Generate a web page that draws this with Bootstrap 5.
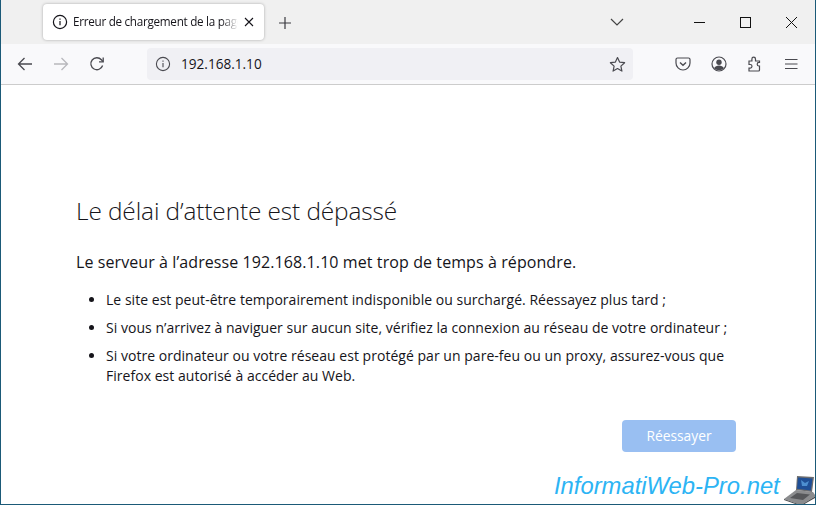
<!DOCTYPE html>
<html lang="fr">
<head>
  <meta charset="UTF-8" />
  <meta name="viewport" content="width=device-width, initial-scale=1" />
  <title>Erreur de chargement de la page</title>
  <link href="https://cdn.jsdelivr.net/npm/bootstrap@5.3.0/dist/css/bootstrap.min.css" rel="stylesheet" />
  <style>
    html, body { height: 100%; }
    body {
      background: #fff;
      font-family: "Open Sans", "Noto Sans", sans-serif;
      color: #15141a;
      overflow: hidden;
    }
    .fenetre {
      height: 505px;
      border-left: 1px solid #1b5a78;
      border-right: 1px solid #1b5a78;
      border-bottom: 1px solid #1b5a78;
      position: relative;
      overflow: hidden;
    }
    .barre-onglets { height: 44px; background: #f0f0f0; padding-left: 42px; }
    .onglet {
      width: 221px; height: 36px; margin-top: 4px;
      background: #fff; border-radius: 4px;
      box-shadow: 0 0 3px rgba(0,0,0,.3);
      padding: 0 9px;
      font-size: 11.7px;
      letter-spacing: -.28px;
    }
    .onglet-titre {
      width: 165px; margin-left: 5px; white-space: nowrap; overflow: hidden;
      -webkit-mask-image: linear-gradient(to right, #000 90%, transparent);
      mask-image: linear-gradient(to right, #000 90%, transparent);
    }
    .ico-plus { margin-left: 14px; }
    .fenetre-btns { margin-left: auto; margin-right: 1px; }
    .chevron { margin-right: 52px; }
    .btn-win { width: 46px; display: flex; justify-content: center; }
    .barre-outils {
      height: 41px; background: #f9f9fb;
      border-bottom: 1px solid #ccc;
      padding-left: 16px;
    }
    .nav-gauche { gap: 20px; width: 130px; }
    .url {
      width: 486px; height: 32px; background: #f0f0f4; border-radius: 4px;
      padding: 0 7px 0 8px; font-size: 13.6px; color: #15141a;
    }
    .url-texte { margin-left: 10px; padding-top: 1px; }
    .nav-droite { gap: 20px; margin-left: 42px; }
    .contenu { padding: 110px 0 0 75px; width: 735px; }
    .titre-erreur { font-size: 24.4px; font-weight: 300; line-height: 32px; margin: 0 0 24px; letter-spacing: -.1px; color: #15141a; }
    .sous-titre { font-size: 16px; line-height: 22px; margin: 0 0 17px; letter-spacing: .09px; }
    .liste-erreur { font-size: 14px; line-height: 20px; padding-left: 30px; margin: 0; letter-spacing: .03px; }
    .liste-erreur li { margin-bottom: 8px; }
    .btn-reessayer {
      background: #99bff2; color: #fff; border: 0; border-radius: 4px;
      width: 114px; height: 32px; font-size: 13.8px; padding: 0;
    }
    .zone-bouton { margin-top: 34px; }
    .filigrane {
      position: absolute; left: 553px; top: 473px;
      font-family: "Liberation Sans", sans-serif; font-style: italic;
      font-size: 23.8px; line-height: 26px; color: #2cb4f4; white-space: nowrap;
    }
    .portable { position: absolute; left: 782px; top: 474px; }
  </style>
</head>
<body>
  <div class="fenetre">
    <!-- Onglets -->
    <div class="barre-onglets d-flex align-items-start">
      <div class="onglet d-flex align-items-center">
        <svg width="16" height="16" viewBox="0 0 16 16" fill="none" stroke="#15141a" stroke-width="1.2"><circle cx="8" cy="8" r="6.6"/><path d="M8 7v4.2M8 4.4v1.4"/></svg>
        <span class="onglet-titre">Erreur de chargement de la page</span>
        <svg class="ms-auto" width="12" height="12" viewBox="0 0 12 12" stroke="#15141a" stroke-width="1.1"><path d="M2 2l8 8M10 2l-8 8"/></svg>
      </div>
      <svg class="ico-plus mt-3" width="14" height="14" viewBox="0 0 14 14" stroke="#3a3a40" stroke-width="1.2"><path d="M7 1v12M1 7h12"/></svg>
      <div class="fenetre-btns d-flex align-items-center h-100">
        <svg class="chevron" width="14" height="8" viewBox="0 0 14 8" fill="none" stroke="#444" stroke-width="1.2"><path d="M1 1l6 6 6-6"/></svg>
        <div class="btn-win"><svg width="11" height="11" viewBox="0 0 11 11" stroke="#111" stroke-width="1"><path d="M0 5.5h11"/></svg></div>
        <div class="btn-win"><svg width="11" height="11" viewBox="0 0 11 11" fill="none" stroke="#111" stroke-width="1"><rect x=".5" y=".5" width="10" height="10"/></svg></div>
        <div class="btn-win"><svg width="11" height="11" viewBox="0 0 11 11" stroke="#111" stroke-width="1"><path d="M0 0l11 11M11 0L0 11"/></svg></div>
      </div>
    </div>

    <!-- Barre d'outils -->
    <div class="barre-outils d-flex align-items-center">
      <div class="nav-gauche d-flex align-items-center">
        <svg width="16" height="16" viewBox="0 0 16 16" fill="none" stroke="#4a4a50" stroke-width="1.3"><path d="M15 8H1.5M7.5 2l-6 6 6 6"/></svg>
        <svg width="16" height="16" viewBox="0 0 16 16" fill="none" stroke="#b8b8bc" stroke-width="1.3"><path d="M1 8h13.5M8.5 2l6 6-6 6"/></svg>
        <svg width="16" height="16" viewBox="0 0 16 16" fill="none" stroke="#4a4a50" stroke-width="1.3"><path d="M13.6 9.5A6 6 0 1 1 12.4 3.8L14 5.6"/><path d="M14.2 1.6v4.2H10" /></svg>
      </div>
      <div class="url d-flex align-items-center">
        <svg width="16" height="16" viewBox="0 0 16 16" fill="none" stroke="#4a4a50" stroke-width="1.1"><circle cx="8" cy="8" r="6.6"/><path d="M8 7v4.2M8 4.4v1.4"/></svg>
        <span class="url-texte">192.168.1.10</span>
        <svg class="ms-auto" width="17" height="17" viewBox="0 0 17 17" fill="none" stroke="#4a4a50" stroke-width="1.2"><path d="M8.5 1.5l2.1 4.6 5 .6-3.7 3.4 1 5-4.4-2.5-4.4 2.5 1-5L1.4 6.700l5-.6z" stroke-linejoin="round"/></svg>
      </div>
      <div class="nav-droite d-flex align-items-center">
        <svg width="16" height="16" viewBox="0 0 16 16" fill="none" stroke="#4a4a50" stroke-width="1.2"><path d="M2.500 2h11A1.500 1.500 0 0 1 15 3.500V7a7 7 0 0 1-14 0V3.500A1.500 1.500 0 0 1 2.500 2z"/><path d="M5 6.500l3 2.800 3-2.800" stroke-width="1.4"/></svg>
        <svg width="16" height="16" viewBox="0 0 16 16" fill="none" stroke="#4a4a50" stroke-width="1.2"><circle cx="8" cy="8" r="7"/><circle cx="8" cy="6.200" r="2.700" fill="#4a4a50" stroke="none"/><path d="M3 12.300c1-2 3-2.800 5-2.800s4 .8 5 2.800c-1.300 1.300-3 2-5 2s-3.700-.7-5-2z" fill="#4a4a50" stroke="none"/></svg>
        <svg width="16" height="16" viewBox="0 0 16 16" fill="none" stroke="#4a4a50" stroke-width="1.2"><path d="M2 15h9.500a1 1 0 0 0 1-1V10h-.5a1.800 1.800 0 0 1 0-3.600h.5V5h-4V3a1.800 1.800 0 0 0-3.600 0v2H2v3.500h1.200a1.800 1.800 0 0 1 0 3.600H2z"/></svg>
        <svg width="16" height="16" viewBox="0 0 16 16" stroke="#4a4a50" stroke-width="1.2"><path d="M2 3.500h12.500M2 8h12.500M2 12.500h12.500"/></svg>
      </div>
    </div>

    <!-- Page d'erreur -->
    <div class="contenu">
      <h1 class="titre-erreur">Le délai d’attente est dépassé</h1>
      <p class="sous-titre">Le serveur à l’adresse 192.168.1.10 met trop de temps à répondre.</p>
      <ul class="liste-erreur">
        <li>Le site est peut-être temporairement indisponible ou surchargé. Réessayez plus tard ;</li>
        <li>Si vous n’arrivez à naviguer sur aucun site, vérifiez la connexion au réseau de votre ordinateur ;</li>
        <li>Si votre ordinateur ou votre réseau est protégé par un pare-feu ou un proxy, assurez-vous que Firefox est autorisé à accéder au Web.</li>
      </ul>
      <div class="zone-bouton d-flex justify-content-end">
        <button class="btn-reessayer" type="button">Réessayer</button>
      </div>
    </div>

    <span class="filigrane">InformatiWeb-Pro.net</span>
    <svg class="portable" width="34" height="31" viewBox="0 0 34 31">
      <path d="M1 25l12-9 17 2 3 4-15 9z" fill="#8b8c8e"/>
      <path d="M7 24l7-5 13 1.500-7 5.500z" fill="#56575a"/>
      <path d="M1 25l17 6 15-9v1.500L18 32 1 26z" fill="#4a4b4d"/>
      <path d="M14 2l17 1-2 15-16-2z" fill="#6d6e70"/>
      <path d="M15 3.500l14.500 1-1.700 12-13.800-1.700z" fill="#1f4f96"/>
      <path d="M18 6l4 3 4-2-2 5-5 0z" fill="#4d8fd0"/>
    </svg>
  </div>

  <script src="https://cdn.jsdelivr.net/npm/bootstrap@5.3.0/dist/js/bootstrap.bundle.min.js"></script>
</body>
</html>
